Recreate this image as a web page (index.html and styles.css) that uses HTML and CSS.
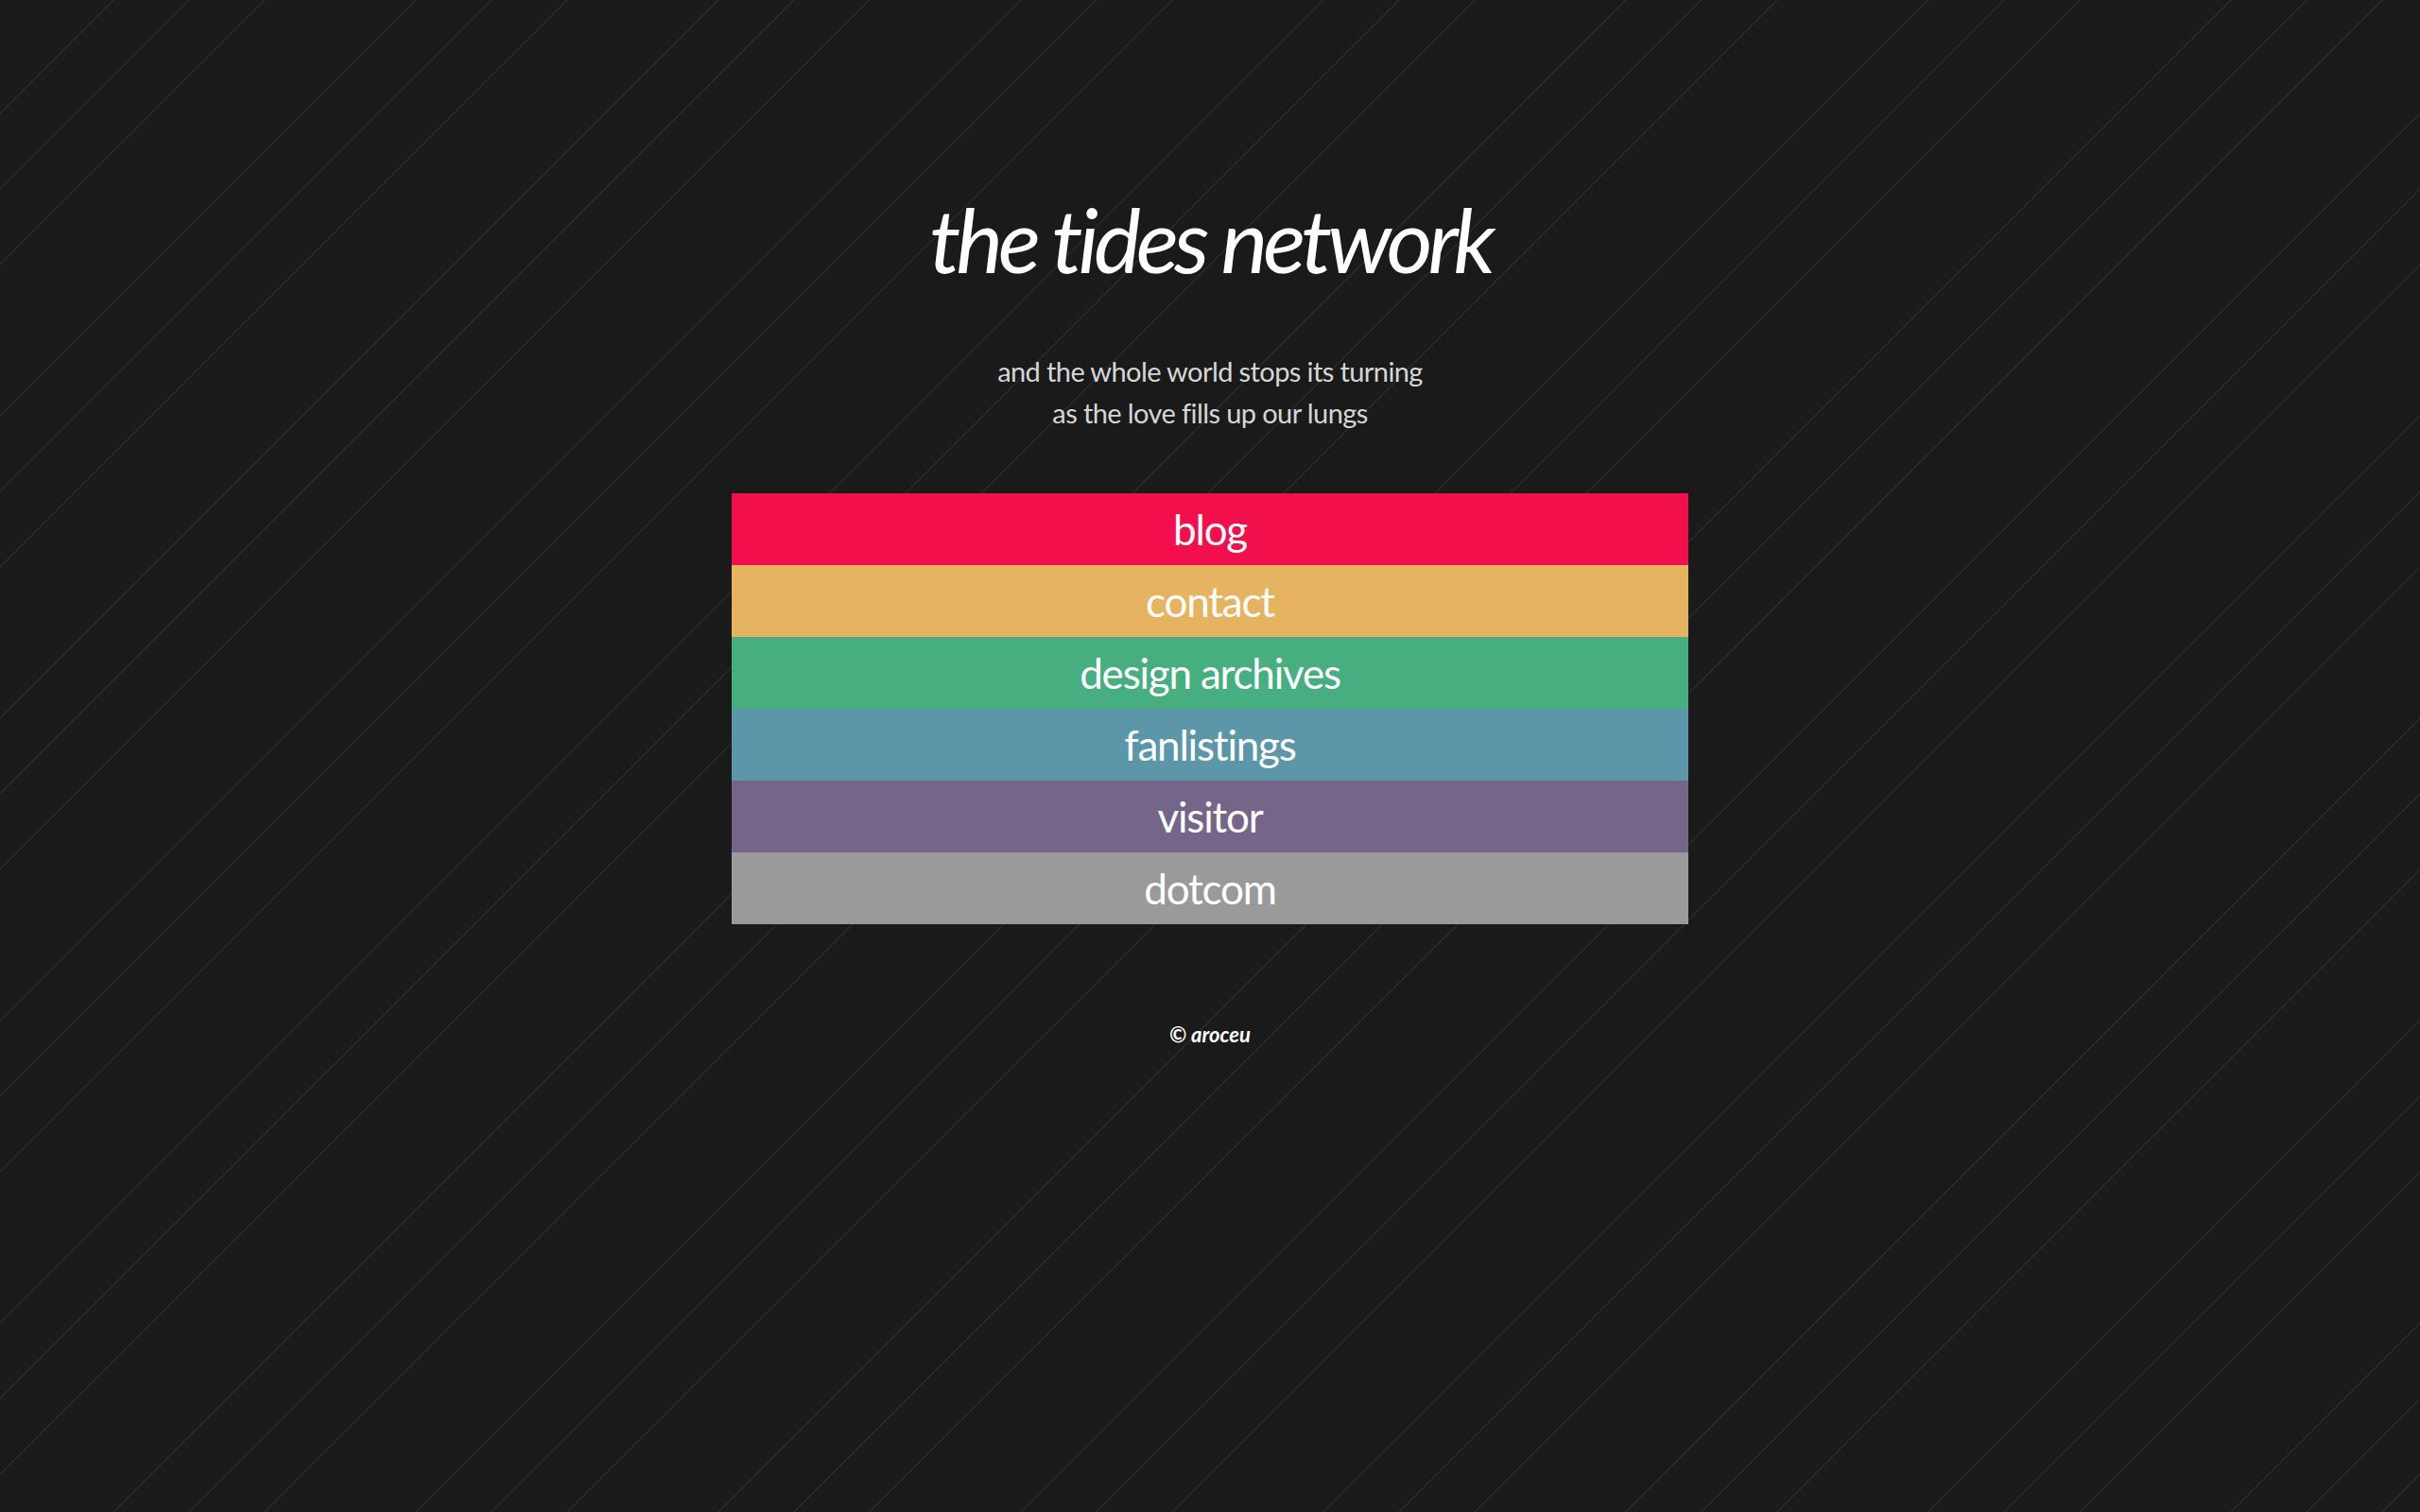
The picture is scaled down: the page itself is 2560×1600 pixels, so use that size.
FILE: index.html
```html
<!DOCTYPE html>
<html lang="en">
<head>
<meta charset="utf-8">
<title>the tides network</title>
<link rel="stylesheet" href="styles.css">
</head>
<body>
<div class="page">
  <h1 class="title">the tides network</h1>
  <p class="lyric">and the whole world stops its turning<br>as the love fills up our lungs</p>
  <nav class="menu">
    <a class="item item-blog" href="#">blog</a>
    <a class="item item-contact" href="#">contact</a>
    <a class="item item-design" href="#">design archives</a>
    <a class="item item-fan" href="#">fanlistings</a>
    <a class="item item-visitor" href="#">visitor</a>
    <a class="item item-dotcom" href="#">dotcom</a>
  </nav>
  <footer class="credit">© aroceu</footer>
</div>
</body>
</html>
```

FILE: styles.css
```css
html {
  background: #1a1a1a;
}
body {
  margin: 0;
  min-height: 100vh;
  background-image: repeating-linear-gradient(135deg,
    transparent 0px,
    transparent 83.85px,
    #2c2c2c 84.55px,
    #2c2c2c 85.15px,
    transparent 85.85px,
    transparent 140.42px,
    #2c2c2c 141.12px,
    #2c2c2c 141.72px,
    transparent 142.42px,
    transparent 197px,
    #2c2c2c 197.7px,
    #2c2c2c 198.3px,
    transparent 199px,
    transparent 226.27px);
  font-family: Lato, "Open Sans", sans-serif;
  color: #fff;
}
.page {
  display: flex;
  flex-direction: column;
  align-items: center;
  padding-top: 190px;
}
.title {
  margin: 0;
  font-style: italic;
  font-weight: 400;
  font-size: 94px;
  line-height: 126px;
  letter-spacing: -5px;
  color: #fff;
}
.lyric {
  margin: 55px 0 0;
  text-align: center;
  font-size: 29px;
  line-height: 44px;
  letter-spacing: -0.6px;
  color: #d6d6d6;
}
.menu {
  margin-top: 63px;
  width: 1012px;
  display: flex;
  flex-direction: column;
}
.item {
  height: 76px;
  display: flex;
  align-items: center;
  justify-content: center;
  color: #fff;
  text-decoration: none;
  font-size: 44px;
  letter-spacing: -1.2px;
}
.item-blog { background: #f20f4b; }
.item-contact { background: #e6b460; }
.item-design { background: #46ae7f; }
.item-fan { background: #5b97a9; }
.item-visitor { background: #756689; }
.item-dotcom { background: #9a9a9a; }
.credit {
  margin-top: 103px;
  font-size: 22px;
  font-style: italic;
  font-weight: 700;
  color: #fff;
}
```
